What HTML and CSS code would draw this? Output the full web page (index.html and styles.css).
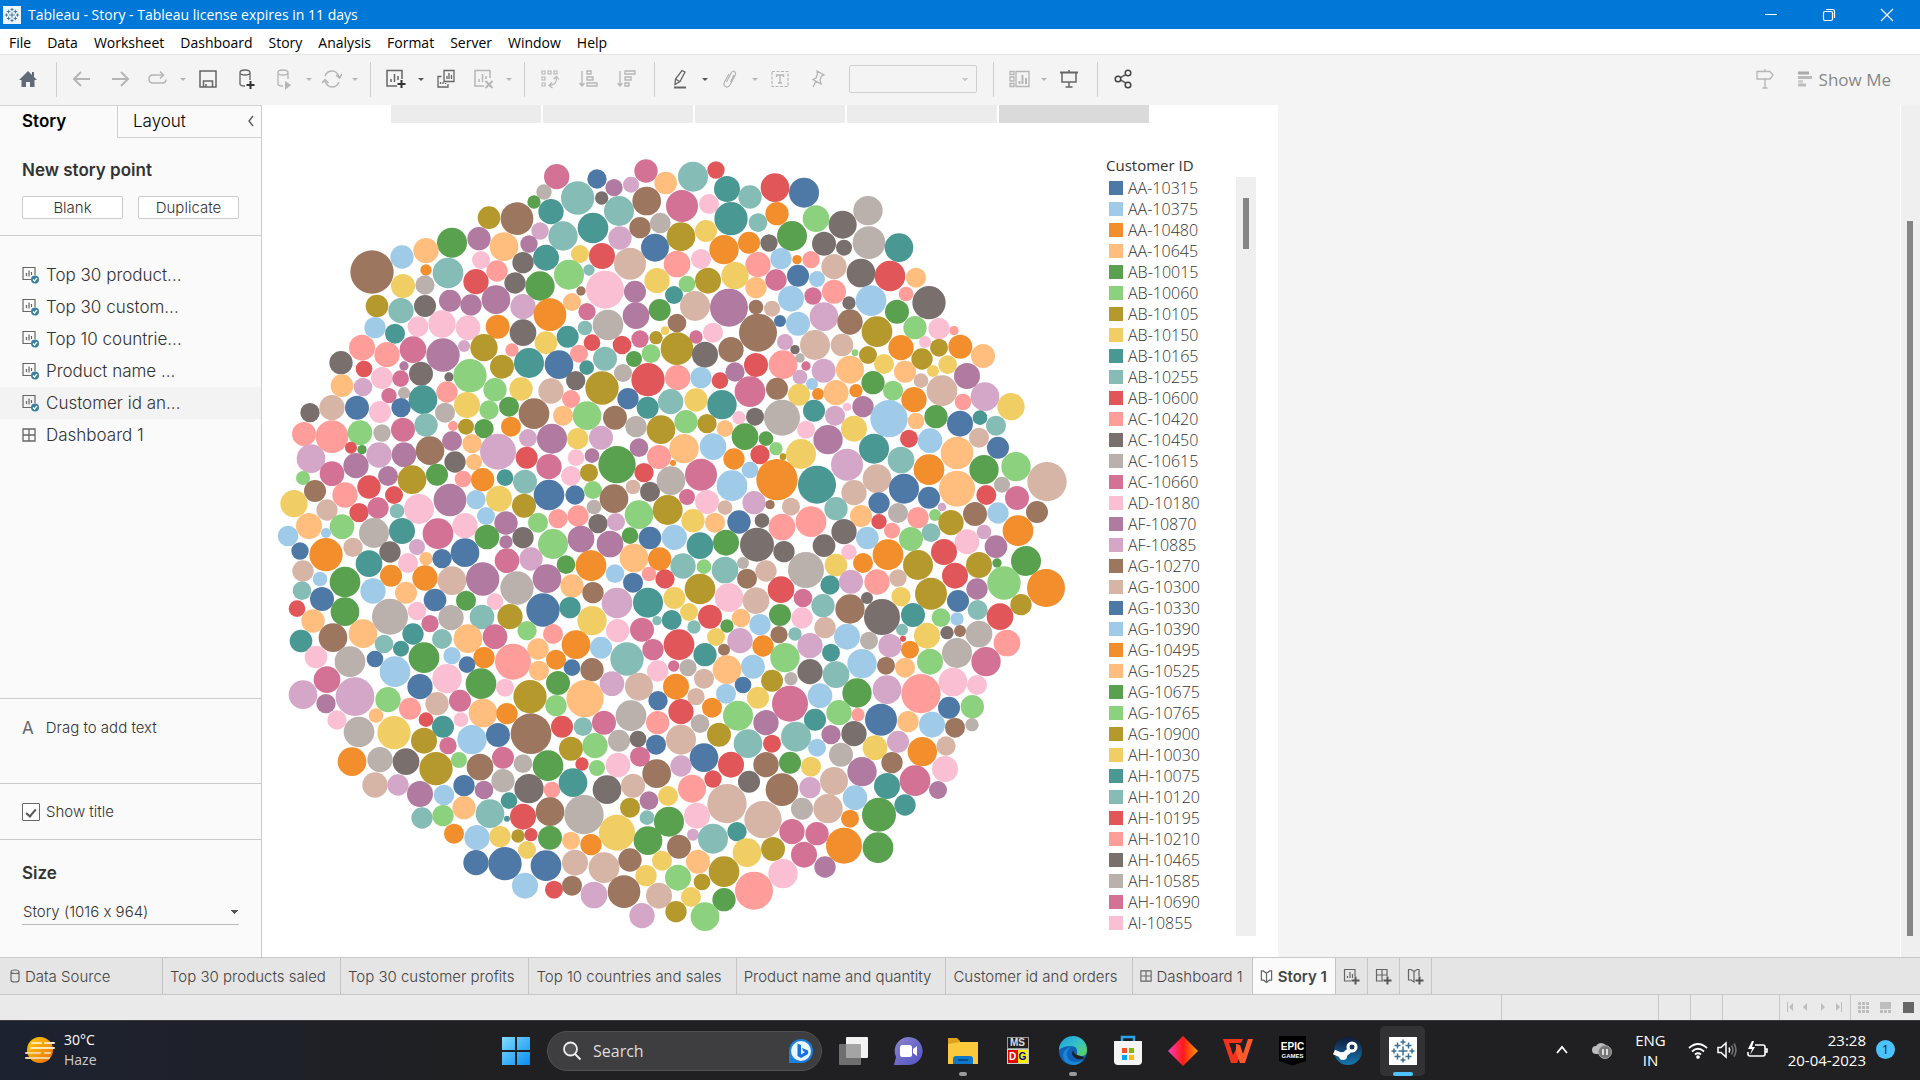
FILE: index.html
```html
<!DOCTYPE html>
<html lang="en">
<head>
<meta charset="utf-8">
<title>Tableau - Story</title>
<link rel="stylesheet" href="styles.css">
</head>
<body>
<svg class="defs" aria-hidden="true">
  <symbol id="sheet" viewBox="0 0 18 18"><path d="M13 9V1.500H1V13.500H9M4.500 10V7M7 10.500V4.500M9.500 9V6" fill="none" stroke="#666" stroke-width="1.200"/><circle cx="13" cy="13.500" r="4" fill="#3a7f9f"/><path d="M11 13.500l1.500 1.500 2.500-3" fill="none" stroke="#fff" stroke-width="1.200"/></symbol>
  <symbol id="grid" viewBox="0 0 14 14"><path d="M1 1h12v12H1zM7 1v12M1 7h12" fill="none" stroke="#666" stroke-width="1.300"/></symbol>
  <symbol id="book" viewBox="0 0 14 14"><path d="M7 3.500L3.500 1H1.500V11H4L7 13.500 10 11H12.500V1H10.500L7 3.500V13.500" fill="none" stroke="#666" stroke-width="1.300"/></symbol>
  <symbol id="tableau" viewBox="0 0 26 26"><path d="M13 8.500v9M8.500 13h9M13 1.500v5M10.500 4h5M13 19.500v5M10.500 22h5M1.500 13h5M4 10.500v5M19.500 13h5M22 10.500v5M7.500 4.500v6M4.500 7.500h6M18.500 4.500v6M15.500 7.500h6M7.500 15.500v6M4.500 18.500h6M18.500 15.500v6M15.500 18.500h6" fill="none" stroke="#3c7095" stroke-width="1.500"/></symbol>
</svg>
<div class="app">
  <header class="titlebar">
    <span class="appicon"><svg width="16" height="16"><use href="#tableau"/></svg></span>
    <span class="apptitle">Tableau - Story - Tableau license expires in 11 days</span>
    <button class="winbtn" aria-label="Minimize"><svg width="14" height="14"><path d="M1 6.500h12" stroke="#fff"/></svg></button>
    <button class="winbtn" aria-label="Restore"><svg width="14" height="14" fill="none" stroke="#fff" stroke-width="1.200"><rect x="1.500" y="3.500" width="9" height="9" rx="1.500"/><path d="M4 1.500h6.500q2 0 2 2V10"/></svg></button>
    <button class="winbtn" aria-label="Close"><svg width="14" height="14"><path d="M1 1l12 12M13 1L1 13" stroke="#fff" stroke-width="1.200"/></svg></button>
  </header>
  <nav class="menubar">
    <a href="#">File</a><a href="#">Data</a><a href="#">Worksheet</a><a href="#">Dashboard</a><a href="#">Story</a><a href="#">Analysis</a><a href="#">Format</a><a href="#">Server</a><a href="#">Window</a><a href="#">Help</a>
  </nav>
  <div class="toolbar">
    <button class="tool" aria-label="Home"><svg width="20" height="20"><path d="M10 2L1 11h2.500v7H8v-5h4v5h4.500v-7H19L16 8V3h-2v3z" fill="#5f6b78"/></svg></button>
    <span class="sep"></span>
    <button class="tool dim" aria-label="Undo"><svg width="20" height="20"><path d="M18 10H3M9 3L2 10l7 7" stroke-width="2"/></svg></button>
    <button class="tool dim" aria-label="Redo"><svg width="20" height="20"><path d="M2 10H17M11 3l7 7-7 7" stroke-width="2"/></svg></button>
    <button class="tool dim" aria-label="Replay"><svg width="20" height="20"><path d="M14 6H5Q1 6 1 10t4 4h9q4 0 4-3.500M12 2.500L15.500 6 12 9.500" stroke-width="1.500"/></svg></button>
    <button class="caret dim" aria-label="Replay options"></button>
    <button class="tool" aria-label="Save"><svg width="20" height="20"><path d="M2 2h16v16H2zM5.500 18v-6h9v6M8 18v-3" stroke-width="1.500"/></svg></button>
    <button class="tool" aria-label="New data source"><svg width="20" height="22"><path d="M14 12V4.500Q14 2 9 2T4 4.500V16q0 2 5 2M4 4.500Q4 7 9 7t5-2.500" stroke-width="1.300"/><path d="M14.500 13v8M10.500 17h8" stroke="#333" stroke-width="2"/></svg></button>
    <button class="tool dim" aria-label="Pause updates"><svg width="20" height="22"><path d="M14 11V4.500Q14 2 9 2T4 4.500V16q0 2 5 2M4 4.500Q4 7 9 7t5-2.500" stroke-width="1.300"/><path d="M11 13l6 4-6 5z" fill="#b5b5b5" stroke="none"/></svg></button>
    <button class="caret dim" aria-label="Update options"></button>
    <button class="tool dim snug" aria-label="Run update"><svg width="20" height="20"><path d="M3 7Q5 2 10 2t7 6M17 13q-2 5-7 5T3 12M14 6l3.500 3L20 5M0 14l3-3.500L6.500 14" stroke-width="1.500"/></svg></button>
    <button class="caret dim" aria-label="Run options"></button>
    <span class="sep"></span>
    <button class="tool" aria-label="New worksheet"><svg width="22" height="22"><path d="M17 11V2.500H2V18H12M6 14v-3M9.500 14V6M13 12V8" stroke-width="1.500"/><path d="M16.500 12v8M12.500 16h8" stroke="#333" stroke-width="2"/></svg></button>
    <button class="caret" aria-label="New sheet options"></button>
    <button class="tool" aria-label="Duplicate"><svg width="20" height="20"><path d="M8 1.500h10v11H8zM11 10V7M13 10V4M15.500 10V6M5.500 7.500H2v10.500h10v-3M4.500 15v-2M7 15v-2M9.500 15v-1" stroke-width="1.300"/></svg></button>
    <button class="tool dim" aria-label="Clear sheet"><svg width="22" height="22"><path d="M17 10V2.500H2V18H11M6 14v-3M9.500 14V6M13 11V8" stroke-width="1.500"/><path d="M12.500 13l7 7M19.500 13l-7 7" stroke-width="2"/></svg></button>
    <button class="caret dim" aria-label="Clear options"></button>
    <span class="sep"></span>
    <button class="tool dim" aria-label="Swap rows and columns"><svg width="20" height="20"><path d="M2 2h3v3H2zM8 2h3v3H8zM14 2h3v3h-3zM2 8h3v3H2zM2 14h3v3H2zM16 8q2 7-6 8.500M13.500 10l3-2.500 2.500 3M12 13.500L9 16.500l3.500 2.500" stroke-width="1.100"/></svg></button>
    <button class="tool dim" aria-label="Sort ascending"><svg width="20" height="20"><path d="M4 2v15M1.500 14L4 17l2.500-3M9 2h4v3H9zM9 8h6v3H9zM9 14h10v3H9z" stroke-width="1.300"/></svg></button>
    <button class="tool dim" aria-label="Sort descending"><svg width="20" height="20"><path d="M4 2v15M1.500 14L4 17l2.500-3M9 2h10v3H9zM9 8h6v3H9zM9 14h4v3H9z" stroke-width="1.300"/></svg></button>
    <span class="sep"></span>
    <button class="tool" aria-label="Highlight"><svg width="20" height="20"><path d="M12 1.500l3 1.500-5 9.500-5 3 .5-5.500zM5.500 10l4 2.500" stroke-width="1.300"/><path d="M4 18.500h12" stroke-width="2"/></svg></button>
    <button class="caret" aria-label="Highlight options"></button>
    <button class="tool dim" aria-label="Group members"><svg width="20" height="20"><path d="M6.500 13l5-9.500q1.500-2 3-1t1 3L10 16q-2 3-4.500 1.500T4.500 13l4.500-8M10.500 13l3.500-7" stroke-width="1.200"/></svg></button>
    <button class="caret dim" aria-label="Group options"></button>
    <button class="tool dim" aria-label="Mark labels"><svg width="20" height="20"><path d="M2 2.500h16v15H2z" stroke-dasharray="3 1.500" stroke-width="1.200"/><path d="M6.500 8V6h7v2M10 6v8M8 14h4" stroke-width="1.300"/></svg></button>
    <button class="tool dim" aria-label="Fix axes"><svg width="20" height="20"><path d="M9 2l7 4-2.500 1-1.500 4 1 4-8-4.500L8 9l1.500-4zM8 12l-3 6" stroke-width="1.300"/></svg></button>
    <select class="fit" aria-label="Fit"><option></option></select>
    <span class="sep"></span>
    <button class="tool dim" aria-label="Show cards"><svg width="22" height="20"><path d="M2 2.500h4v3H2zM2 8h4v4H2zM2 14.500h4v3H2zM8 2.500h13v15H8z" stroke-width="1.300"/><path d="M11.500 15v-3M14.500 15V6M18 15V9" stroke-width="2"/></svg></button>
    <button class="caret dim" aria-label="Card options"></button>
    <button class="tool" aria-label="Presentation mode"><svg width="20" height="20"><path d="M1 3.500h18" stroke-width="2"/><path d="M10 1v2M3 4v9h14V4M10 13v5M6.500 18h7" stroke-width="1.500"/></svg></button>
    <span class="sep"></span>
    <button class="tool" aria-label="Share"><svg width="20" height="20"><path d="M7.500 8.500l5.500-3M7.500 11l5.500 3" stroke-width="1.500"/><g stroke="#444" stroke-width="1.500"><circle cx="5" cy="10" r="2.800"/><circle cx="15" cy="4" r="2.800"/><circle cx="15" cy="16" r="2.800"/></g></svg></button>
    <button class="tool dim guide" aria-label="Data guide"><svg width="20" height="20"><path d="M10 0v2M2 2.500h13l3 3.500-3 4H2zM10 10v9M7.500 19h5" stroke-width="1.300"/></svg></button>
    <button class="showme"><svg width="15" height="16"><path d="M0 2h11" stroke="#aaa" stroke-width="3"/><path d="M0 6.500h14M0 14h8" stroke="#bbb" stroke-width="3"/><path d="M0 10.500h5" stroke="#d0d0d0" stroke-width="3"/></svg>Show Me</button>
  </div>
  <div class="workspace">
    <aside class="side">
      <div class="panes"><button class="pane active">Story</button><button class="pane">Layout<svg width="8" height="12"><path d="M6 1L2 6l4 5" fill="none" stroke="#555" stroke-width="1.300"/></svg></button></div>
      <section class="newpoint"><h2>New story point</h2><div class="pair"><button>Blank</button><button>Duplicate</button></div></section>
      <ul class="sheets">
        <li><svg width="18" height="18"><use href="#sheet"/></svg>Top 30 product...</li>
        <li><svg width="18" height="18"><use href="#sheet"/></svg>Top 30 custom...</li>
        <li><svg width="18" height="18"><use href="#sheet"/></svg>Top 10 countrie...</li>
        <li><svg width="18" height="18"><use href="#sheet"/></svg>Product name ...</li>
        <li class="on"><svg width="18" height="18"><use href="#sheet"/></svg>Customer id an...</li>
        <li><svg width="14" height="14"><use href="#grid"/></svg>Dashboard 1</li>
      </ul>
      <section class="drag"><span class="glyph">A</span>Drag to add text</section>
      <section class="title"><input type="checkbox" id="showtitle" checked><label for="showtitle">Show title</label></section>
      <section class="size"><h2><label for="size">Size</label></h2><select id="size"><option>Story (1016 x 964)</option></select></section>
    </aside>
    <main class="canvas">
      <div class="story">
        <div class="points"><button aria-label="Story point 1"></button><button aria-label="Story point 2"></button><button aria-label="Story point 3"></button><button aria-label="Story point 4"></button><button class="on" aria-label="Story point 5"></button></div>
        <div class="view">
          <svg class="bubbles" id="bubbles" viewBox="0 0 2400 2370" role="img" aria-label="Packed bubbles by customer"></svg>
          <div class="legend"><h3>Customer ID</h3><div class="scroller"><ul id="legend"></ul><div class="track"><div class="thumb"></div></div></div></div>
        </div>
      </div>
      <div class="pagescroll"><div class="pagethumb"></div></div>
    </main>
  </div>
  <nav class="tabs">
    <button class="source"><svg width="10" height="14"><path d="M1 3v8q0 2 4 2t4-2V3M1 3q0-2 4-2t4 2q0 1.500-4 1.500T1 3z" fill="none" stroke="#666" stroke-width="1.200"/></svg>Data Source</button><button>Top 30 products saled</button><button>Top 30 customer profits</button><button>Top 10 countries and sales</button><button>Product name and quantity</button><button>Customer id and orders</button><button class="tight"><svg width="12" height="12"><use href="#grid"/></svg>Dashboard 1</button><button class="tight on"><svg width="13" height="13"><use href="#book"/></svg>Story 1</button>
    <button class="add" aria-label="New worksheet"><svg width="17" height="17"><path d="M12 8V1.500H1.500V13H8M4.500 10V8M7 10V4M9.500 10V6" fill="none" stroke="#666" stroke-width="1.200"/><path d="M12.500 8.500v8M8.500 12.500h8" stroke="#555" stroke-width="2"/></svg></button><button class="add" aria-label="New dashboard"><svg width="17" height="17"><path d="M12 8V1.500H1.500V13H8M7 1v12M1 7h11" fill="none" stroke="#666" stroke-width="1.200"/><path d="M12.500 8.500v8M8.500 12.500h8" stroke="#555" stroke-width="2"/></svg></button><button class="add" aria-label="New story"><svg width="17" height="17"><path d="M12 8V1.500H10L7 3.500 4 1.500H1.500V12H4l3 2V3.500" fill="none" stroke="#666" stroke-width="1.200"/><path d="M12.500 8.500v8M8.500 12.500h8" stroke="#555" stroke-width="2"/></svg></button>
  </nav>
  <div class="status">
    <span class="w157"></span><span class="w32"></span><span class="w32"></span><span class="w57"></span>
    <span class="pager"><svg width="64" height="14" fill="#bdbdbd"><path d="M4 2h1v10H4zM10 3v8L6 7zM24 3v8l-4-4zM38 3v8l4-4zM53 3v8l4-4zM58 2h1v10h-1z"/></svg></span>
    <span class="views"><svg width="58" height="14" fill="#bdbdbd"><path d="M1 2h3v3H1zM5 2h3v3H5zM9 2h3v3H9zM1 6h3v3H1zM5 6h3v3H5zM9 6h3v3H9zM1 10h3v3H1zM5 10h3v3H5zM9 10h3v3H9zM23 2h11v7H23zM23 10h3v3h-3zM27 10h3v3h-3zM31 10h3v3h-3z"/><path d="M46 2h11v11H46z" fill="#666"/></svg></span>
  </div>
  <footer class="taskbar">
    <div class="weather">
      <svg width="30" height="30"><defs><linearGradient id="sun" x1="0" y1="0" x2="1" y2="1"><stop offset="0" stop-color="#ffd000"/><stop offset="1" stop-color="#e96a10"/></linearGradient></defs><circle cx="15" cy="15" r="13" fill="url(#sun)"/><path d="M7 8h9M20 8h9M6 13h23" stroke="#ffe9b8" stroke-width="2" stroke-linecap="round"/><path d="M1 18h14M20 18h5M1 23h23" stroke="#f0d39a" stroke-width="2" stroke-linecap="round"/></svg>
      <div><div>30°C</div><div class="muted">Haze</div></div>
    </div>
    <div class="apps">
      <button class="tile" aria-label="Start"><svg width="30" height="30"><defs><linearGradient id="win" x1="0" y1="0" x2="1" y2="1"><stop offset="0" stop-color="#7fdcff"/><stop offset="1" stop-color="#0a8cf0"/></linearGradient></defs><path d="M1 1h13v13H1zM16 1h13v13H16zM1 16h13v13H1zM16 16h13v13H16z" fill="url(#win)"/></svg></button>
      <label class="search"><svg width="20" height="20"><circle cx="8.500" cy="8" r="6.500" fill="#555" stroke="#eee" stroke-width="1.800"/><path d="M13 13l5.500 5.500" stroke="#eee" stroke-width="2"/></svg><input type="text" placeholder="Search" aria-label="Search"><svg width="26" height="26"><path d="M1 25V13A12 12 0 1 1 13 25z" fill="#1b7fe0"/><circle cx="13" cy="13" r="10" fill="#e9f7ff"/><path d="M9.500 5.500l3.500 1.500v9.500l4-2.500-2-1-1-3 6 2.500q1 3-1.500 4.500L13 20l-3.500-2z" fill="#1672e0"/></svg></label>
      <button class="tile" aria-label="Task view"><svg width="30" height="30"><rect x="8" y="1" width="22" height="21" rx="1" fill="#f2f2f2"/><rect x="1" y="8" width="22" height="21" rx="1" fill="#8a8a8a" opacity=".75"/></svg></button>
      <button class="tile" aria-label="Chat"><svg width="30" height="30"><defs><linearGradient id="chat" x1="0" y1="0" x2="1" y2="1"><stop offset="0" stop-color="#8f86c9"/><stop offset="1" stop-color="#4f50c8"/></linearGradient></defs><path d="M1 29l2-8A14 14 0 1 1 15 29z" fill="url(#chat)"/><rect x="7" y="9" width="12" height="12" rx="2.500" fill="#fff"/><path d="M20 13l4-3v10l-4-3z" fill="#fff"/></svg></button>
      <button class="tile dot" aria-label="File Explorer"><svg width="32" height="30"><path d="M1 2h9l3 3v5H1z" fill="#e0a01a"/><path d="M1 8l12-2h18v22H1z" fill="#fdc93c"/><path d="M6 28v-5q0-3 3-3h14q3 0 3 3v5z" fill="#0f78c8"/><path d="M11 24h10" stroke="#06406f" stroke-width="1.500"/></svg></button>
      <button class="tile" aria-label="MSI"><span class="msi"><b>MS</b><i><s>D</s><u>G</u></i></span></button>
      <button class="tile dot" aria-label="Edge"><svg width="30" height="30"><defs><linearGradient id="edge" x1="0" y1="0" x2="1" y2="1"><stop offset="0" stop-color="#1a9be0"/><stop offset=".5" stop-color="#35c1c9"/><stop offset="1" stop-color="#5fd64f"/></linearGradient></defs><circle cx="15" cy="15" r="14" fill="#0f62b5"/><path d="M1 14A14 14 0 0 1 29 14q0 6-6 6-5 0-4-3 1-7-6-7-8 0-12 4z" fill="url(#edge)"/><path d="M13 11q-7 5-2 13 6 4 14 0-4 5-10 5-9-1-10-9 0-7 8-9z" fill="#1b86d6"/><path d="M15 14q-3 6 4 9 5 1 8-1l2 1-6-3q-8-1-8-6z" fill="#202022"/></svg></button>
      <button class="tile" aria-label="Microsoft Store"><svg width="30" height="32"><path d="M9 7V2h12v5" fill="none" stroke="#27a5ea" stroke-width="2.500"/><path d="M1 6h28v20q0 4-4 4H5q-4 0-4-4z" fill="#f4f4f4"/><path d="M9 13h5v5H9z" fill="#f25022"/><path d="M16 13h5v5h-5z" fill="#7fba00"/><path d="M9 20h5v5H9z" fill="#00a4ef"/><path d="M16 20h5v5h-5z" fill="#ffb900"/></svg></button>
      <button class="tile" aria-label="Diamond"><svg width="30" height="30"><defs><linearGradient id="dia"><stop offset="0" stop-color="#ff3fc0"/><stop offset=".5" stop-color="#ff1a1a"/><stop offset="1" stop-color="#ff9a00"/></linearGradient></defs><path d="M15 0l15 15-15 15L0 15z" fill="url(#dia)"/></svg></button>
      <button class="tile" aria-label="WPS Office"><svg width="32" height="26"><path d="M1 1h20l-2 4H7l4 12 5-9 4 6-5 11h-6z" fill="#f2331c"/><path d="M14 6l4 1 3 9 5-15h5l-8 24h-5l-4-11z" fill="#ff5a2a"/></svg></button>
      <button class="tile" aria-label="Epic Games"><span class="epic"><b>EPIC</b><i>GAMES</i></span></button>
      <button class="tile" aria-label="Steam"><svg width="30" height="30"><defs><linearGradient id="steam" x1="0" y1="0" x2="0" y2="1"><stop offset="0" stop-color="#101b3c"/><stop offset="1" stop-color="#1577b0"/></linearGradient></defs><circle cx="15" cy="15" r="14" fill="url(#steam)"/><path d="M1 16l9 4 8-7" fill="none" stroke="#fff" stroke-width="5"/><circle cx="19" cy="11" r="5.500" fill="#fff"/><circle cx="19" cy="11" r="3" fill="#1a3763" stroke="#fff"/><circle cx="10" cy="20" r="4" fill="#fff"/></svg></button>
      <button class="tile current" aria-label="Tableau"><span class="tab-logo"><svg width="26" height="26"><use href="#tableau"/></svg></span></button>
    </div>
    <div class="tray">
      <svg width="14" height="14"><path d="M2 10l5-6 5 6" fill="none" stroke="#fff" stroke-width="1.800"/></svg>
      <svg class="cloud" width="22" height="20"><path d="M5 14a4 4 0 0 1 0-8 6 6 0 0 1 11 2l-3 6z" fill="#bbb"/><circle cx="14" cy="12" r="6.500" fill="#777" stroke="#aaa"/><path d="M12 9v6M16 9v6" stroke="#fff" stroke-width="1.500"/></svg>
      <div class="lang">ENG<br>IN</div>
      <svg width="20" height="18" fill="none" stroke="#fff" stroke-width="1.700"><path d="M1 7q9-8 18 0M4 10.500q6-5.500 12 0M7 13.500q3-2.500 6 0"/><circle cx="10" cy="16" r="1" fill="#fff"/></svg>
      <svg width="20" height="18" fill="none" stroke="#fff" stroke-width="1.500"><path d="M1 6.500h3l5-4.500v14l-5-4.500H1zM12 6.500q1.500 2.500 0 5"/><path d="M14.500 4.500q3 4.500 0 9M17 2.500q4 6.500 0 13" stroke="#777"/></svg>
      <svg width="22" height="18" fill="none" stroke="#fff" stroke-width="1.600"><path d="M9 4h8q2 0 2 2v7q0 2-2 2H4q-2 0-2-2v-2M19.500 8h1.500v3h-1.500"/><path d="M6 0L2 8h4l-2 6 5-8H6l2-6z" fill="#fff" stroke="none"/></svg>
      <div class="clock">23:28<br>20-04-2023</div>
      <span class="count">1</span>
    </div>
  </footer>
</div>
<script src="app.js"></script>
</body>
</html>
```
FILE: styles.css
```css
* { box-sizing: border-box; }
body { margin: 0; font-family: "Open Sans", "Noto Sans", sans-serif; font-size: 14px; color: #333; background: #f4f4f4; }
button, select, input { font: inherit; color: inherit; }
button { border: 0; background: none; padding: 0; }
a { color: inherit; text-decoration: none; }
h2, h3, ul { margin: 0; padding: 0; list-style: none; }
svg { display: block; flex: none; }
.defs { position: absolute; width: 0; height: 0; }
.app { display: flex; flex-direction: column; min-height: 100vh; }

.titlebar { display: flex; align-items: center; height: 29px; background: #0078d7; color: #fff; padding: 0 4px 0 3px; }
.appicon { background: #eef6fb; padding: 1px; margin-right: 7px; }
.apptitle { flex: 1; }
.winbtn { width: 58px; display: grid; place-items: center; }
.menubar { display: flex; align-items: center; gap: 16px; height: 25px; padding: 1px 9px 0; background: #fff; color: #000; }

.toolbar { display: flex; align-items: center; height: 51px; padding: 0 29px 2px 9px; background: #f4f4f4; border-top: 1px solid #e8e8e8; }
.tool { width: 38px; height: 34px; display: grid; place-items: center; flex: none; }
.tool svg { fill: none; stroke: #666; }
.tool:first-child svg { stroke: none; }
.tool.dim svg { stroke: #b5b5b5; }
.snug { width: 34px; }
.sep { width: 1px; height: 35px; background: #d0d0d0; margin: 0 6px 0 9px; flex: none; }
.caret { width: 12px; height: 34px; display: grid; place-items: center; flex: none; }
.caret::after { content: ""; border: 3px solid transparent; border-top-color: #555; border-bottom: 0; }
.caret.dim::after { border-top-color: #b5b5b5; }
.fit { width: 128px; height: 28px; margin: 0 7px 0 12px; border: 1px solid #d0d0d0; border-radius: 2px; appearance: none; background: linear-gradient(to bottom left, #ccc 50%, transparent 50%) no-repeat 112px 12px / 3px 4px, linear-gradient(to bottom right, #ccc 50%, transparent 50%) no-repeat 115px 12px / 3px 4px; }
.guide { margin-left: auto; }
.showme { display: flex; align-items: center; gap: 6px; margin-left: 14px; font-size: 17px; color: #888; }

.workspace { display: flex; flex: 1; }
.side { width: 262px; flex: none; background: #fafafa; border-right: 1px solid #ccc; display: flex; flex-direction: column; font-family: Inter, sans-serif; font-size: 15px; font-weight: 300; font-feature-settings: "calt" 0; }
.panes { display: flex; height: 33px; font-size: 17px; border-top: 1px solid #d4d4d4; color: #000; }
.pane { flex: 1; display: flex; align-items: center; justify-content: space-between; padding: 0 6px 1px 15px; border-left: 1px solid #d0d0d0; border-bottom: 1px solid #d0d0d0; }
.pane.active { flex: 0 0 117px; padding-left: 22px; font-weight: 600; border-color: transparent; border-left: 0; }
.side h2 { font-size: 17px; font-weight: 600; line-height: 20px; }
.newpoint { padding: 22px 22px 16px; border-bottom: 1px solid #ccc; }
.pair { display: grid; grid-template-columns: 1fr 1fr; gap: 15px; margin-top: 16px; }
.pair button { height: 23px; border: 1px solid #ccc; border-radius: 2px; background: #fff; }
.sheets { flex: 1; padding-top: 23px; font-size: 17px; }
.sheets li { display: flex; align-items: center; height: 32px; padding-left: 22px; gap: 6px; }
.sheets li:last-child { gap: 10px; }
.sheets li.on { background: #f3f3f3; }
.drag { height: 85px; border-top: 1px solid #ccc; padding: 19px 22px; display: flex; gap: 12px; line-height: 20px; }
.glyph { font-size: 17px; font-weight: 400; color: #666; }
.title { height: 56px; border-top: 1px solid #ccc; padding: 0 22px; display: flex; align-items: center; gap: 6px; }
.title input { appearance: none; width: 18px; height: 18px; margin: 0; border: 1px solid #666; border-radius: 1px; background: #fff; display: grid; place-items: center; }
.title input:checked::after { content: ""; width: 4px; height: 8px; border: solid #555; border-width: 0 2px 2px 0; transform: rotate(40deg); }
.size { height: 118px; border-top: 1px solid #ccc; padding: 23px 22px 0; }
.size select { width: 100%; height: 26px; margin-top: 16px; padding: 0 0 1px 1px; border: 0; border-bottom: 1px solid #bbb; border-radius: 0; appearance: none; background: linear-gradient(to bottom left, #555 50%, transparent 50%) no-repeat 209px 11px / 4px 4px, linear-gradient(to bottom right, #555 50%, transparent 50%) no-repeat 213px 11px / 4px 4px; }

.canvas { flex: 1; display: flex; justify-content: space-between; background: #f4f4f4; }
.story { width: 1016px; background: #fff; }
.points { display: grid; grid-template-columns: repeat(5, 1fr); gap: 2px; margin: 0 129px; }
.points button { height: 18px; background: #ececec; }
.points .on { background: #dadada; }
.view { display: flex; padding: 27px 22px 0 8px; }
.bubbles { width: 800px; height: 790px; }
.legend { flex: 1; margin-left: 36px; font-size: 16px; font-weight: 300; }
.legend h3 { font-size: 15px; font-weight: 500; line-height: 23px; padding-top: 4px; }
.scroller { display: flex; justify-content: space-between; }
.legend li { display: flex; align-items: center; height: 21px; gap: 5px; padding-left: 3px; }
.swatch { width: 14px; height: 14px; }
.track { width: 20px; height: 759px; background: #efefef; padding: 21px 7px 0; }
.thumb { width: 6px; height: 51px; background: #858585; }
.pagescroll { width: 20px; background: #efefef; border-left: 1px solid #fff; padding: 116px 7px 21px 6px; display: flex; }
.pagethumb { width: 6px; background: #858585; }

.tabs { display: flex; height: 38px; background: #e5e5e5; border: solid #c8c8c8; border-width: 1px 0; font-family: Inter, sans-serif; font-size: 15px; font-weight: 300; color: #444; }
.tabs button { display: flex; align-items: center; gap: 6px; padding: 0 14px 0 7px; border-right: 1px solid #c4c4c4; }
.tabs .source { width: 163px; padding-left: 10px; gap: 5px; }
.tabs .tight { padding: 0 9px 0 7px; gap: 5px; }
.tabs .on { background: #fafafa; font-weight: 600; padding-right: 8px; }
.tabs .add { width: 32px; padding: 0; justify-content: center; }
.status { display: flex; justify-content: flex-end; height: 25px; background: #eaeaea; }
.status span { border-left: 1px solid #c8c8c8; display: grid; place-items: center; padding-bottom: 2px; }
.w157 { width: 157px; }
.w32 { width: 32px; }
.w57 { width: 57px; }
.pager { width: 71px; }
.views { width: 70px; }

.taskbar { display: grid; grid-template-columns: 1fr auto 1fr; height: 60px; color: #fff; border-top: 1px solid #3c3c40; background: linear-gradient(to right, #1d2230, #202022 25%); }
.weather { display: flex; align-items: center; gap: 9px; padding: 0 0 2px 25px; line-height: 20px; }
.muted { color: #ccc; }
.apps { display: flex; align-items: center; padding-right: 2px; }
.tile { width: 55px; height: 50px; display: grid; place-items: center; position: relative; }
.dot::after { content: ""; position: absolute; bottom: 0; width: 8px; height: 4px; border-radius: 2px; background: #9a9a9a; }
.search { width: 275px; height: 40px; margin: 0 3px 0 4px; border-radius: 20px; background: #3e3e40; border: 1px solid #505052; display: flex; align-items: center; gap: 11px; padding: 0 7px 0 14px; }
.search input { flex: 1; min-width: 0; border: 0; background: none; font-size: 16px; padding: 0; }
.search input::placeholder { color: #ddd; opacity: 1; }
.current::before { content: ""; position: absolute; inset: 0 5px; background: #323235; border-radius: 5px; z-index: 0; }
.current::after { content: ""; position: absolute; bottom: 0; width: 20px; height: 4px; border-radius: 2px; background: #4cc2ff; }
.tab-logo { position: relative; background: #fff; padding: 1px; }
.msi { display: grid; font: 800 10px/13px "Liberation Sans", sans-serif; text-align: center; }
.msi b { border: 1px solid #999; color: #ddd; width: 22px; line-height: 10px; height: 12px; }
.msi i { display: flex; font-style: normal; border: 1px solid #ccc; }
.msi s { width: 10px; background: #e00; color: #fff; text-decoration: none; }
.msi u { width: 10px; background: #fe0; color: #00a; text-decoration: none; }
.epic { width: 27px; height: 30px; display: grid; align-content: center; background: #000; clip-path: polygon(0 0, 100% 0, 100% 85%, 50% 100%, 0 85%); font: 700 10px/11px "Liberation Sans", sans-serif; text-align: center; }
.epic i { font-size: 6px; line-height: 8px; font-style: normal; }
.tray { display: flex; align-items: center; justify-content: flex-end; padding: 0 25px 2px 0; font-size: 15px; line-height: 20px; }
.cloud { margin: 0 22px; }
.lang { text-align: center; margin-right: 22px; }
.tray .lang ~ svg { margin-right: 9px; }
.clock { text-align: right; margin: 0 10px 0 11px; }
.count { width: 19px; height: 19px; border-radius: 50%; background: #4cc2ff; color: #111; font-size: 12px; line-height: 19px; text-align: center; }
```
FILE: app.js
```js
// Twenty-colour palette, keyed by letter.
const palette = {
  a: '#4e79a7', b: '#a0cbe8', c: '#f28e2b', d: '#ffbe7d', e: '#59a14f', f: '#8cd17d', g: '#b6992d',
  h: '#f1ce63', i: '#499894', j: '#86bcb6', k: '#e15759', l: '#ff9d9a', m: '#79706e', n: '#bab0ac',
  o: '#d37295', p: '#fabfd2', q: '#b07aa1', r: '#d4a6c8', s: '#9d7660', t: '#d7b5a6'
};

// Each bubble is "x y radius colour", grouped by the quadrant origin.
const quadrants = [
  [0, 0, `860 80 38 o;981 87 29 a;1128 63 35 o;1187 99 34 d;1032 113 26 q;1083 104 24 r;822 126 23 n;792 156 20 e;843 185 38 i;923 144 50 j;995 144 20 m;1047 183 45 j;1130 153 43 s;657 203 34 g;741 206 49 s;810 243 26 r;879 258 44 j;969 234 46 i;1050 264 35 r;1110 233 32 s;1171 219 31 n;1155 293 42 a;546 278 45 e;627 266 35 q;702 290 43 d;777 282 26 q;828 323 39 i;930 312 27 h;996 318 39 k;1080 341 48 t;396 321 35 b;468 302 38 d;306 366 65 s;468 360 17 c;399 408 36 h;465 405 29 n;534 369 46 j;633 330 27 p;681 363 32 l;759 338 32 m;618 395 38 k;735 399 32 m;810 408 44 e;897 374 45 f;957 360 17 j;933 423 14 s;1005 419 57 p;1095 425 33 q;1161 392 38 h;321 468 34 g;393 482 38 j;465 468 33 m;540 452 33 q;603 465 32 q;678 449 43 q;759 470 38 r;840 494 49 c;906 456 27 d;951 485 26 o;1098 497 40 q;1169 480 33 e;315 533 32 b;375 551 30 i;444 530 31 p;516 522 41 p;594 533 37 p;683 530 36 c;759 548 40 m;828 578 34 h;893 560 33 i;945 534 22 j;1014 525 46 n;966 578 25 k;1056 585 28 k;1110 567 26 o;1158 563 20 g;1185 542 13 h;276 593 39 l;351 614 38 l;429 599 40 o;519 615 50 q;582 588 18 r;642 593 41 g;726 600 20 l;777 639 45 i;867 644 43 a;927 611 27 l;1005 626 36 j;1092 627 24 e;1143 611 28 f;213 638 35 m;282 657 25 k;402 648 14 q;336 684 33 p;392 686 25 o;453 671 36 m;537 681 14 m;600 677 50 f;696 650 36 g;950 653 22 i;917 692 29 m;996 714 50 g;1059 669 27 n;1134 689 50 k;216 707 34 d;279 711 28 r;357 737 23 o;402 729 18 n;459 749 43 i;531 726 32 l;591 765 39 h;675 719 35 f;753 717 35 h;843 723 38 t;903 747 27 l;1074 746 32 a;1133 773 33 i;120 788 29 m;186 773 38 t;261 773 36 a;330 786 33 p;393 773 29 a;525 788 30 n;657 780 29 f;717 770 30 e;792 791 46 s;879 797 30 d;951 797 43 f;1035 803 36 s;1098 830 32 n;1173 839 43 g;102 852 36 l;186 860 49 l;270 848 37 f;336 849 26 n;399 839 36 o;468 825 35 j;549 828 15 l;588 830 24 g;642 836 29 e;723 830 30 c;774 864 27 r;846 866 45 q;923 866 32 h;993 863 36 r;546 873 30 q;606 881 29 d;684 905 54 r;480 902 43 s;243 893 18 k;276 899 14 e;123 926 43 r;258 947 38 q;327 915 38 r;402 914 37 q;555 936 32 m;612 936 24 d;770 923 33 k;837 950 38 o;918 923 25 p;966 917 22 q;1041 944 56 e;1107 893 28 q;1167 921 36 l;1122 968 29 k;99 984 21 f;186 971 37 o;354 978 30 q;426 989 43 g;501 974 33 e;579 987 25 l;638 989 35 c;705 983 25 i;765 995 36 j;903 978 30 p;957 968 27 g;135 1023 33 s;225 1035 38 l;297 1011 35 k;372 1035 27 k;540 1050 49 q;618 1049 29 b;687 1046 39 h;837 1035 46 a;915 1035 29 a;969 1020 27 f;1032 1046 43 s;1089 1011 22 t;1140 1025 30 m;1203 992 43 n;72 1061 41 h;171 1080 32 t;267 1088 29 k;324 1074 32 o;381 1083 22 j;447 1077 45 p;762 1067 36 g;648 1098 27 b;708 1119 35 q;804 1118 30 f;864 1106 29 l;924 1098 32 l;972 1071 22 n;984 1121 29 m;1038 1116 27 r;1107 1094 43 f;1193 1080 45 g;117 1128 39 d;216 1130 37 f;168 1149 15 b;312 1149 45 n;396 1143 39 i;504 1151 46 o;585 1127 38 p;54 1158 31 b;651 1161 37 e;759 1163 32 m;708 1176 20 q;849 1182 45 f;933 1167 40 q;1020 1182 40 q;1080 1157 25 e;1140 1164 34 a`],
  [1200, 0, `36 168 48 o;69 80 45 j;138 60 26 k;171 117 39 i;240 141 35 j;117 162 30 p;183 206 50 i;315 113 43 k;402 128 45 a;321 191 35 c;264 218 28 j;438 206 40 f;518 224 42 m;594 182 44 n;33 260 43 g;108 243 33 h;162 299 44 c;237 278 33 c;297 279 26 m;366 258 45 e;462 281 36 m;522 293 24 m;597 278 49 n;687 293 43 i;21 342 40 l;93 327 30 p;333 326 32 b;264 344 38 l;381 329 14 c;423 329 26 l;492 350 38 t;573 369 43 m;660 378 46 k;738 383 30 d;195 377 41 h;114 392 39 g;51 402 25 f;258 413 32 d;318 390 32 o;384 377 33 a;441 387 24 b;12 435 27 i;363 446 39 b;429 438 26 o;492 425 36 l;537 459 20 m;603 452 46 b;708 432 22 l;777 458 50 m;75 468 45 t;177 473 57 q;258 471 22 s;306 476 24 t;681 485 36 e;21 519 28 s;330 513 18 a;384 521 36 b;462 500 43 r;540 516 38 s;621 545 46 g;735 533 35 f;807 536 32 p;852 542 14 l;264 548 57 s;129 548 30 p;78 561 20 o;21 596 49 g;105 614 39 m;183 599 38 s;345 576 24 r;375 599 14 m;435 585 45 t;516 585 34 t;555 608 10 f;594 615 27 g;693 593 38 c;765 576 18 p;807 593 27 g;871 590 36 c;939 618 36 d;258 645 36 k;339 644 43 l;390 624 14 n;408 648 14 o;461 662 36 r;540 659 42 d;642 642 30 h;756 627 32 g;833 644 28 h;789 663 18 h;705 665 33 d;891 678 39 q;23 683 38 l;93 683 32 b;150 692 25 k;195 666 29 q;390 681 22 r;426 702 18 b;609 698 35 e;669 722 30 f;753 692 22 t;816 722 46 t;240 725 46 o;321 716 33 s;387 734 33 h;444 732 18 c;498 728 38 d;558 722 20 c;732 749 38 c;879 756 25 l;945 740 43 r;1023 770 41 h;2 755 38 j;78 750 35 h;156 764 44 i;255 800 27 m;336 803 54 n;432 782 33 i;495 797 30 r;531 771 13 p;579 770 32 q;657 806 56 b;738 813 25 d;798 800 35 e;870 821 39 a;930 803 22 i;978 827 30 j;207 803 20 p;48 815 35 f;111 821 29 g;165 836 25 d;225 860 40 e;288 866 22 e;408 839 27 p;552 836 39 h;474 869 44 q;717 866 27 k;780 872 37 b;861 909 49 d;927 863 30 t;984 893 33 a;42 896 44 d;129 890 40 b;318 896 20 f;270 914 29 k;192 927 32 c;339 920 10 g;393 912 45 h;612 896 45 i;531 944 48 r;693 930 40 j;777 959 46 c;942 959 44 e;1038 950 44 f;1131 995 59 t;9 939 9 c;240 960 25 b;321 989 62 c;93 974 48 o;186 1007 46 b;441 1004 57 i;621 986 43 t;702 1016 45 a;861 1016 54 d;996 1004 24 n;949 1035 30 k;1041 1044 36 o;1101 1086 33 s;51 1041 24 o;111 1056 36 p;165 1073 22 t;252 1058 35 r;300 1064 14 s;363 1070 27 t;552 1028 38 t;627 1059 32 a;777 1043 33 a;816 1071 13 r;498 1076 35 j;684 1089 30 n;744 1103 32 l;795 1095 18 f;843 1118 38 g;915 1092 36 s;984 1089 32 b;1044 1142 46 c;69 1112 35 h;135 1118 30 d;207 1116 35 a;276 1112 22 m;336 1131 40 l;423 1115 46 l;573 1098 33 d;627 1115 23 k;522 1145 38 m;666 1142 24 l;942 1146 22 r;783 1148 28 j;13 1162 38 b;90 1187 40 i;168 1178 39 e;261 1184 51 m;462 1187 34 m;592 1164 34 b;723 1167 36 f;891 1175 37 p;978 1190 34 q`],
  [0, 1170, `90 33 26 a;168 44 50 c;249 22 29 t;360 36 32 m;297 71 40 i;99 93 32 t;150 117 22 b;225 126 46 e;363 107 33 c;414 69 30 p;441 21 24 r;468 56 20 d;516 56 29 a;585 38 43 a;465 114 38 c;546 122 43 t;638 117 50 q;711 62 37 o;783 57 35 r;741 144 50 n;831 116 43 q;888 74 28 e;963 77 46 c;1092 54 43 d;1169 57 35 c;1035 101 28 b;1137 102 22 l;1089 128 30 a;1185 117 29 k;906 138 35 d;969 158 32 s;1041 189 46 r;1134 188 45 i;96 152 28 j;309 153 38 b;408 158 33 d;156 177 36 a;81 206 25 k;225 215 43 e;495 180 34 a;588 182 30 e;675 185 25 p;819 210 50 a;900 203 32 i;360 230 54 n;441 213 28 p;543 233 38 n;636 231 37 j;720 230 38 g;966 242 44 h;129 243 35 d;480 251 26 o;771 272 29 f;849 282 30 l;1043 272 35 p;1116 269 36 o;1161 242 14 j;93 303 34 i;189 293 43 s;279 281 43 d;342 312 28 j;429 282 32 i;516 297 30 j;594 296 43 d;675 290 37 o;393 326 24 i;804 327 32 d;918 314 43 c;993 323 33 b;1149 329 32 o;1071 357 50 j;138 351 34 p;240 365 46 n;315 357 25 a;462 353 46 e;546 347 26 b;642 353 32 c;591 374 25 a;729 365 54 l;858 359 30 c;906 383 25 a;966 389 35 s;1163 393 32 p;375 395 46 b;807 392 30 d;171 419 40 o;450 440 38 a;531 416 44 p;633 431 46 e;705 443 27 p;864 429 36 e;1026 431 37 r;1107 440 42 t;99 464 43 r;255 470 58 r;168 491 29 q;354 479 38 f;420 506 33 l;501 491 35 t;570 482 33 o;780 470 50 g;945 476 56 d;858 497 32 f;1164 482 29 a;1083 527 46 n;639 519 43 d;711 521 32 c;201 540 29 p;318 527 22 d;267 576 46 n;468 539 22 k;519 560 33 i;573 539 22 p;372 578 50 h;783 581 61 s;876 560 33 k;939 560 28 j;1002 548 36 o;1163 548 35 l;462 602 39 g;606 599 44 b;684 585 36 a;534 617 26 o;903 626 36 g;975 617 38 f;1047 602 33 n;1104 597 25 m;1158 614 30 a;246 665 43 c;330 659 38 n;408 665 40 m;498 686 50 g;567 660 24 f;630 681 40 s;699 653 33 o;759 671 28 n;834 677 46 e;936 672 20 k;981 684 24 f;1044 675 37 p;1110 650 30 o;1160 701 43 s;315 735 38 t;384 735 32 r;450 762 39 q;522 765 31 b;582 737 32 a;642 750 28 q;699 722 35 n;777 746 44 m;846 750 25 l;909 728 43 i;1011 749 43 m;1089 737 36 t;1137 782 28 q;456 834 32 j;519 827 32 f;582 803 35 d;660 821 43 j;717 782 25 i;711 836 9 i;759 830 39 k;840 815 43 s;942 824 59 n;1080 803 30 g;1131 833 22 j;1041 878 54 h;552 881 30 c;621 893 38 b;690 890 32 h;744 888 20 g;783 884 20 k;840 893 36 e;903 902 27 d;963 914 32 c;1134 902 43 e;771 930 27 h;618 968 38 a;705 971 50 a;828 977 46 a;915 968 39 t;1002 983 46 t;1080 960 35 s;1128 1007 32 h;1176 962 30 h;765 1037 39 b;852 1049 27 k;906 1037 30 s;972 1065 40 r;1062 1055 49 s;1167 1067 39 t;1116 1127 38 r`],
  [1200, 1170, `342 35 32 m;408 90 54 n;219 69 18 n;39 78 38 j;102 80 22 f;165 90 40 j;498 75 34 h;537 36 23 p;579 69 30 c;654 44 46 c;744 75 45 g;822 36 39 k;927 75 39 g;981 69 14 e;1068 63 45 e;1002 129 50 f;1128 144 57 c;855 107 39 k;921 147 32 q;1053 194 32 g;90 147 46 g;231 116 30 s;288 93 32 t;333 149 40 k;480 135 29 i;543 125 36 r;621 126 38 l;684 114 26 t;783 161 48 g;864 183 33 a;693 170 29 h;591 174 18 m;636 231 54 m;540 207 44 s;459 197 35 j;399 174 28 o;177 173 43 p;258 182 40 t;13 174 33 h;57 216 27 h;120 230 36 k;213 234 28 d;330 225 33 e;396 234 32 p;729 225 36 i;813 233 28 f;861 237 20 b;923 210 30 j;990 230 40 k;5 240 30 i;72 261 20 j;171 258 20 e;270 254 32 b;465 263 32 t;696 269 18 j;771 287 39 h;831 278 20 m;870 273 18 s;927 282 40 n;1011 309 40 l;27 314 46 k;138 291 27 h;210 302 38 r;327 284 26 s;375 282 20 j;420 317 38 r;531 290 39 b;597 302 27 n;660 317 35 r;699 296 9 k;720 329 27 c;279 318 32 c;105 344 35 i;162 329 18 s;345 353 44 f;483 338 27 i;861 339 45 n;780 365 39 f;948 365 44 o;11 378 17 o;54 383 26 n;171 389 43 d;249 380 36 b;420 395 38 m;576 371 44 b;648 377 27 s;705 383 30 d;849 426 43 p;921 435 30 p;102 416 30 t;306 422 33 g;363 416 20 n;498 404 40 j;753 461 59 l;651 449 43 r;219 435 25 a;18 440 39 c;78 470 26 t;168 461 30 b;264 473 33 h;360 491 54 o;450 467 37 b;561 459 44 e;126 503 30 c;204 527 45 f;33 515 38 k;507 518 38 f;564 524 20 l;633 539 48 a;837 503 33 a;907 500 35 f;714 545 32 d;786 554 39 b;855 563 30 s;906 554 20 n;435 539 33 i;90 551 28 n;147 584 36 g;288 548 38 q;234 611 43 j;306 611 27 k;378 590 45 j;483 584 29 q;552 581 38 m;441 623 27 b;33 599 45 t;102 653 43 a;615 623 37 h;684 605 33 r;757 635 44 c;828 618 29 t;513 644 36 n;576 695 44 q;666 668 32 s;735 722 46 o;825 687 39 p;804 750 27 q;33 678 32 r;183 674 39 k;288 674 38 s;360 668 33 e;423 680 30 h;129 717 26 k;237 725 33 m;492 723 42 t;651 738 39 i;66 746 42 l;336 749 49 s;420 743 32 r;555 773 37 b;705 795 32 i;-6 768 30 h;171 791 59 t;279 839 56 t;396 806 33 n;474 806 44 t;540 836 27 c;627 824 51 e;81 827 39 p;-3 845 45 e;69 884 18 r;129 896 45 j;201 875 29 i;366 875 38 o;441 881 35 o;522 917 54 c;624 923 46 e;27 920 36 s;231 938 43 h;309 927 36 g;402 944 39 o;465 981 32 q;84 965 36 d;162 995 46 g;24 1013 39 f;96 1026 25 g;339 1001 44 p;252 1052 57 l;63 1071 30 h;162 1079 35 e;105 1130 43 f;18 1115 32 g`]
];
const chart = document.getElementById('bubbles');
for (const [dx, dy, list] of quadrants) {
  for (const item of list.split(';')) {
    const [x, y, r, key] = item.split(' ');
    const c = document.createElementNS('http://www.w3.org/2000/svg', 'circle');
    c.setAttribute('cx', dx + +x);
    c.setAttribute('cy', dy + +y);
    c.setAttribute('r', r);
    c.setAttribute('fill', palette[key]);
    chart.append(c);
  }
}

const customers = ['AA-10315', 'AA-10375', 'AA-10480', 'AA-10645', 'AB-10015', 'AB-10060', 'AB-10105', 'AB-10150', 'AB-10165', 'AB-10255', 'AB-10600', 'AC-10420', 'AC-10450', 'AC-10615', 'AC-10660', 'AD-10180', 'AF-10870', 'AF-10885', 'AG-10270', 'AG-10300', 'AG-10330', 'AG-10390', 'AG-10495', 'AG-10525', 'AG-10675', 'AG-10765', 'AG-10900', 'AH-10030', 'AH-10075', 'AH-10120', 'AH-10195', 'AH-10210', 'AH-10465', 'AH-10585', 'AH-10690', 'AI-10855'];
const colours = Object.values(palette);
const legend = document.getElementById('legend');
customers.forEach((name, i) => {
  const li = document.createElement('li');
  const swatch = document.createElement('span');
  swatch.className = 'swatch';
  swatch.style.background = colours[i % colours.length];
  li.append(swatch, name);
  legend.append(li);
});
```
